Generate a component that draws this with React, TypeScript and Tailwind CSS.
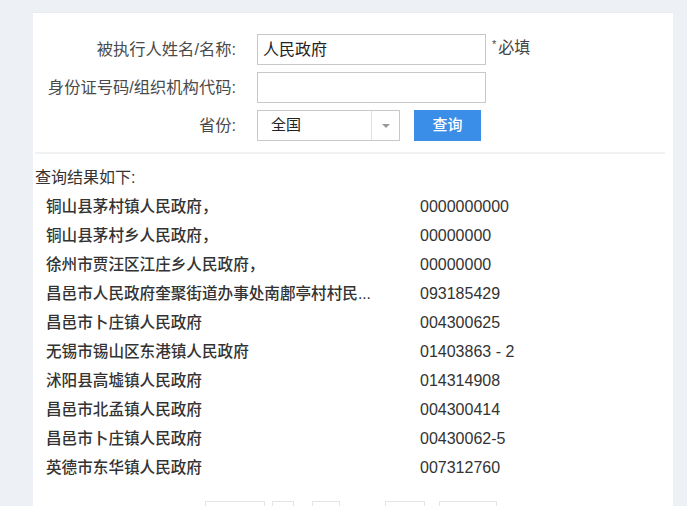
const rows: [string, string][] = [
  ["铜山县茅村镇人民政府，", "0000000000"],
  ["铜山县茅村乡人民政府，", "00000000"],
  ["徐州市贾汪区江庄乡人民政府，", "00000000"],
  ["昌邑市人民政府奎聚街道办事处南鄌亭村村民...", "093185429"],
  ["昌邑市卜庄镇人民政府", "004300625"],
  ["无锡市锡山区东港镇人民政府", "01403863 - 2"],
  ["沭阳县高墟镇人民政府", "014314908"],
  ["昌邑市北孟镇人民政府", "004300414"],
  ["昌邑市卜庄镇人民政府", "00430062-5"],
  ["英德市东华镇人民政府", "007312760"],
];

// pagination boxes, only their top edge shows at the bottom of the view
const pages = [
  { key: "prev", w: "w-[60px]", ml: "ml-0" },
  { key: "p1", w: "w-[22px]", ml: "ml-[7px]" },
  { key: "p2", w: "w-[28px]", ml: "ml-[18px]" },
  { key: "p3", w: "w-[40px]", ml: "ml-[45px]" },
  { key: "next", w: "w-[58px]", ml: "ml-[14px]" },
];

const cjk = "font-['Liberation_Sans','Noto_Sans_CJK_SC',sans-serif]";

export default function App() {
  return (
    <div className={`h-[506px] w-[687px] overflow-hidden bg-[#edf1f6] pt-[12px] ${cjk}`}>
      <div className="ml-[33px] h-[520px] w-[640px] border-t border-[#e9ecef] bg-white">
        {/* Search form */}
        <div className="grid grid-cols-[203px_auto] items-center gap-x-[21px] gap-y-[7px] pt-[21px] text-[16.3px] text-[#4a4a4a]">
          <div className="whitespace-nowrap text-right">被执行人姓名/名称:</div>
          <div className="flex items-center">
            <div className="flex h-[31px] w-[229px] items-center border border-[#c8c8c8] px-[5px] text-[16px] text-[#222]">
              人民政府
            </div>
            <span className="ml-[6px] -mt-[3px] text-[16px] text-[#444]">
              <span className="mr-[2px] text-[11px] align-top">*</span>必填
            </span>
          </div>

          <div className="whitespace-nowrap text-right">身份证号码/组织机构代码:</div>
          <div className="h-[31px] w-[229px] border border-[#c8c8c8]" />

          <div className="text-right">省份:</div>
          <div className="flex items-center">
            <div className="flex h-[31px] w-[143px] items-center border border-[#c8c8c8]">
              <span className="flex-1 pl-[13px] text-[15px] text-[#222]">全国</span>
              <div className="flex h-full w-[28px] items-center justify-center border-l border-[#e2e2e2]">
                <span className="h-0 w-0 border-x-[4px] border-t-[4px] border-x-transparent border-t-[#999]" />
              </div>
            </div>
            <button className="ml-[14px] h-[31px] w-[67px] bg-[#3b8ee8] text-[15px] font-medium text-white">
              查询
            </button>
          </div>
        </div>

        <div className="ml-[2px] mt-[11px] h-[2px] w-[630px] bg-[#f1f2f4]" />

        {/* Results */}
        <div className="ml-[2px] mt-[12px] text-[16px] text-[#333]">查询结果如下:</div>
        <div className="mt-[2px]">
          {rows.map(([name, code], i) => (
            <div key={i} className="flex h-[29px] items-center pl-[13px] text-[15.6px] font-medium text-[#333]">
              <span className="w-[374px] whitespace-nowrap">{name}</span>
              <span className="text-[16px] font-normal text-[#333]">{code}</span>
            </div>
          ))}
        </div>

        {/* Pagination */}
        <div className="ml-[172px] mt-[19px] flex">
          {pages.map((p) => (
            <div key={p.key} className={`h-[28px] border border-[#e4e4e4] ${p.w} ${p.ml}`} />
          ))}
        </div>
      </div>
    </div>
  );
}
